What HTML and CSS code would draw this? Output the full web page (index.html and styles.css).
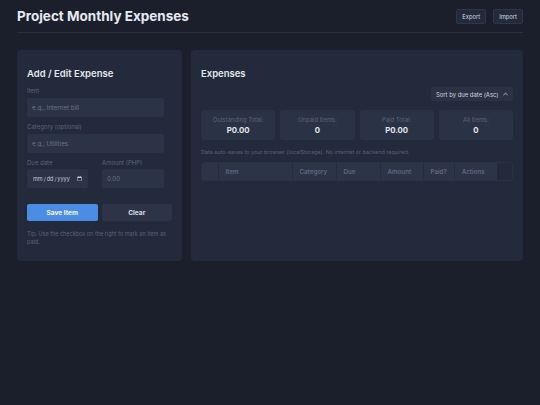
FILE: index.html
```html
<!DOCTYPE html>
<html lang="en">
<head>
<meta charset="utf-8">
<title>Project Monthly Expenses</title>
<link rel="stylesheet" href="styles.css">
</head>
<body>
<header class="topbar">
  <h1 class="title">Project Monthly Expenses</h1>
  <div class="top-actions">
    <button class="btn-sm">Export</button>
    <button class="btn-sm">Import</button>
  </div>
</header>
<main class="layout">
  <section class="panel form-panel">
    <h2 class="panel-title">Add / Edit Expense</h2>
    <div class="field">
      <label class="label">Item</label>
      <input class="input" type="text" placeholder="e.g., Internet bill">
    </div>
    <div class="field">
      <label class="label">Category (optional)</label>
      <input class="input" type="text" placeholder="e.g., Utilities">
    </div>
    <div class="row2">
      <div class="field">
        <label class="label">Due date</label>
        <input class="input date" type="date">
      </div>
      <div class="field">
        <label class="label">Amount (PHP)</label>
        <input class="input" type="text" placeholder="0.00">
      </div>
    </div>
    <div class="btn-row">
      <button class="btn primary">Save Item</button>
      <button class="btn secondary">Clear</button>
    </div>
    <p class="tip">Tip: Use the checkbox on the right to mark an item as paid.</p>
  </section>
  <section class="panel list-panel">
    <h2 class="panel-title">Expenses</h2>
    <div class="sort-row">
      <div class="select-wrap">
        <select class="select">
          <option>Sort by due date (Asc)</option>
        </select>
        <svg class="chev" viewBox="0 0 8 5" width="5" height="4"><path d="M1 4 L4 1 L7 4" fill="none" stroke="#c9cfdb" stroke-width="1.3" stroke-linecap="round" stroke-linejoin="round"/></svg>
      </div>
    </div>
    <div class="stats">
      <div class="stat"><div class="stat-label">Outstanding Total:</div><div class="stat-value">P0.00</div></div>
      <div class="stat"><div class="stat-label">Unpaid Items:</div><div class="stat-value">0</div></div>
      <div class="stat"><div class="stat-label">Paid Total:</div><div class="stat-value">P0.00</div></div>
      <div class="stat"><div class="stat-label">All Items:</div><div class="stat-value">0</div></div>
    </div>
    <p class="note">Data auto-saves to your browser (localStorage). No internet or backend required.</p>
    <div class="table-wrap">
      <table class="table">
        <thead>
          <tr>
            <th class="c0"></th>
            <th class="c1">Item</th>
            <th class="c2">Category</th>
            <th class="c3">Due</th>
            <th class="c4">Amount</th>
            <th class="c5">Paid?</th>
            <th class="c6">Actions</th>
          </tr>
        </thead>
        <tbody></tbody>
      </table>
    </div>
  </section>
</main>
</body>
</html>
```
FILE: styles.css
```css
* { box-sizing: border-box; }
html, body { margin: 0; padding: 0; }
body {
  background: #1b1f2b;
  color: #e4e8ef;
  font-family: Inter, "Noto Sans", sans-serif;
  padding: 0 17px;
  min-height: 405px;
}
.topbar {
  display: flex;
  justify-content: space-between;
  align-items: center;
  height: 33px;
  border-bottom: 1px solid #2b3041;
}
.title {
  margin: 0;
  font-size: 13.5px;
  line-height: 17px;
  font-weight: 700;
  color: #e7eaf0;
}
.top-actions { display: flex; gap: 7px; }
.btn-sm {
  height: 15px;
  padding: 0 5px;
  background: #232a3a;
  border: 1px solid #2f3649;
  border-radius: 2px;
  color: #d6dbe5;
  font-family: inherit;
  font-size: 5.8px;
}
.layout {
  display: grid;
  grid-template-columns: 165px 1fr;
  gap: 9px;
  margin-top: 17px;
}
.panel {
  background: #222a3c;
  border-radius: 4px;
  padding: 10px;
  height: 211px;
}
.panel-title {
  margin: 7.7px 0 7.8px;
  font-size: 9.5px;
  line-height: 12px;
  font-weight: 600;
  color: #e4e8ef;
}
.field { display: flex; flex-direction: column; }
.label {
  font-size: 6px;
  color: #5c6479;
  margin-bottom: 2.5px;
  line-height: 8px;
}
.input {
  width: calc(100% - 8px);
  height: 19px;
  background: #2b3346;
  border: none;
  border-radius: 2px;
  color: #cfd5df;
  font-family: inherit;
  font-size: 6.2px;
  padding: 0 5px;
  margin-bottom: 6.5px;
  outline: none;
}
.input::placeholder { color: #6c7489; }
.date {
  color-scheme: dark;
  color: #c3c9d5;
  font-size: 5.5px;
  height: 18.5px;
  width: calc(100% - 9px);
  padding: 0 4px 0 5px;
}
.row2 {
  display: grid;
  grid-template-columns: 1fr 1fr;
  gap: 5px;
}
.row2 .label { margin-bottom: 2px; }
.btn-row {
  display: grid;
  grid-template-columns: 1fr 1fr;
  gap: 4px;
  margin-top: 9.5px;
}
.btn {
  height: 17px;
  border: none;
  border-radius: 2px;
  font-family: inherit;
  font-size: 6.6px;
  font-weight: 700;
}
.primary { background: #4a8de2; color: #f2f6fc; }
.secondary { background: #2d3447; color: #d8dce5; }
.tip {
  margin: 9px 0 0;
  font-size: 5.5px;
  line-height: 8px;
  color: #5a6277;
}
.sort-row {
  display: flex;
  justify-content: flex-end;
}
.select-wrap { position: relative; width: 82px; }
.select {
  display: block;
  appearance: none;
  -webkit-appearance: none;
  width: 100%;
  height: 14px;
  background: #2a3244;
  border: none;
  border-radius: 2px;
  color: #cfd5df;
  font-family: inherit;
  font-size: 5.9px;
  padding: 0 5px;
  outline: none;
}
.chev { position: absolute; right: 5px; top: 5px; }
.stats {
  display: grid;
  grid-template-columns: repeat(4, 1fr);
  gap: 5px;
  margin-top: 9px;
}
.stat {
  background: #2a3245;
  border-radius: 3px;
  height: 30px;
  display: flex;
  flex-direction: column;
  align-items: center;
  justify-content: center;
  gap: 0.5px;
}
.stat-label { font-size: 5.9px; line-height: 8px; color: #5d6579; }
.stat-value { font-size: 7.8px; line-height: 10px; font-weight: 700; color: #e6e9ef; }
.note {
  margin: 7.5px 0 0;
  font-size: 5.45px;
  line-height: 8px;
  color: #5a6277;
}
.table-wrap {
  margin-top: 6.5px;
  border: 1px solid #2a3143;
  border-radius: 3px;
  background: #232a3c;
  overflow: hidden;
}
.table { border-collapse: collapse; }
.table th {
  background: #2c3448;
  height: 17px;
  padding: 0 7px;
  text-align: left;
  font-size: 6.2px;
  font-weight: 600;
  color: #5f6880;
  border-right: 1px solid #252c3d;
}
.c0 { width: 16px; }
.c1 { width: 74px; }
.c2 { width: 44px; }
.c3 { width: 44px; }
.c4 { width: 43px; }
.c5 { width: 30px; }
.c6 { width: 43px; }
.table th.c6 { border-right: none; }
```
